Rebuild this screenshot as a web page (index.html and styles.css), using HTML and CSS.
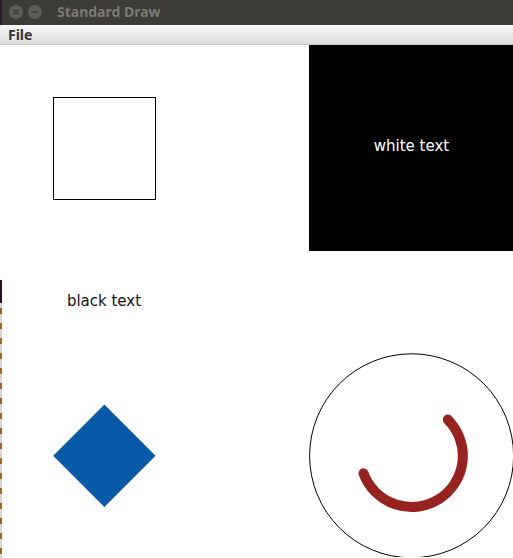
FILE: index.html
```html
<!DOCTYPE html>
<html>
<head>
<meta charset="utf-8">
<link rel="stylesheet" href="styles.css">
</head>
<body>
<div class="window">
  <div class="titlebar">
    <div class="btns">
      <span class="wbtn"><svg width="14" height="14" viewBox="0 0 14 14"><path d="M4.5 4.5 L9.5 9.5 M9.5 4.5 L4.5 9.5" stroke="#3a3935" stroke-width="1.4"/></svg></span>
      <span class="wbtn"><svg width="14" height="14" viewBox="0 0 14 14"><path d="M3.5 7 H10.5" stroke="#3a3935" stroke-width="1.4"/></svg></span>
    </div>
    <span class="title">Standard Draw</span>
  </div>
  <div class="menubar"><span class="menu">File</span></div>
  <div class="body">
    <div class="edge"></div>
    <svg class="canvas" width="512" height="512" viewBox="0 0 512 512">
      <rect x="51.5" y="52.5" width="102" height="102" fill="none" stroke="#000" stroke-width="1"/>
      <rect x="307" y="0" width="205" height="206" fill="#000"/>
      <text class="t" x="409.5" y="106" fill="#fff" text-anchor="middle">white text</text>
      <text class="t" x="102" y="261" fill="#111" text-anchor="middle">black text</text>
      <polygon points="102.4,359.6 153.6,410.8 102.4,462 51.2,410.8" fill="#095AA6"/>
      <circle cx="409.6" cy="410.8" r="102" fill="none" stroke="#000" stroke-width="1"/>
      <path d="M361.5 428.3 A51.2 51.2 0 1 0 445.8 374.6" fill="none" stroke="#96231F" stroke-width="10" stroke-linecap="round"/>
    </svg>
  </div>
</div>
</body>
</html>
```
FILE: styles.css
```css
html, body {
  margin: 0;
  padding: 0;
  background: #fff;
  overflow: hidden;
}
.window {
  width: 513px;
  height: 558px;
  display: flex;
  flex-direction: column;
  overflow: hidden;
}
.titlebar {
  height: 25px;
  flex: none;
  background: #3c3b37;
  display: flex;
  align-items: center;
  box-shadow: inset 2px 0 0 #2c1a28;
}
.btns {
  display: flex;
  gap: 5px;
  padding-left: 9px;
  margin-top: -2px;
}
.wbtn {
  width: 14px;
  height: 14px;
  border-radius: 50%;
  background: #5d5c57;
  display: block;
}
.wbtn svg { display: block; }
.title {
  margin-left: 15px;
  margin-top: -2px;
  font-family: "Noto Sans", sans-serif;
  font-weight: bold;
  font-size: 14px;
  color: #7c7a74;
}
.menubar {
  height: 19px;
  flex: none;
  background: linear-gradient(#f7f7f7, #dedede);
  border-bottom: 1px solid #c6c6c6;
  display: flex;
  align-items: center;
  padding-left: 8px;
}
.menu {
  font-family: "Noto Sans", sans-serif;
  font-weight: bold;
  font-size: 14px;
  color: #333;
}
.body {
  flex: 1;
  display: flex;
  min-height: 0;
}
.edge {
  width: 2px;
  flex: none;
  background:
    linear-gradient(to bottom, #fff 0, #fff 235px, #2c0e23 235px, #2c0e23 258px, transparent 258px),
    repeating-linear-gradient(to bottom, #d6d6d6 0, #d6d6d6 8px, #a8641c 8px, #a8641c 14px, #d6d6d6 14px, #d6d6d6 15px);
}
.canvas {
  display: block;
  flex: none;
}
.t {
  font-family: "DejaVu Sans", sans-serif;
  font-size: 15px;
}
```
